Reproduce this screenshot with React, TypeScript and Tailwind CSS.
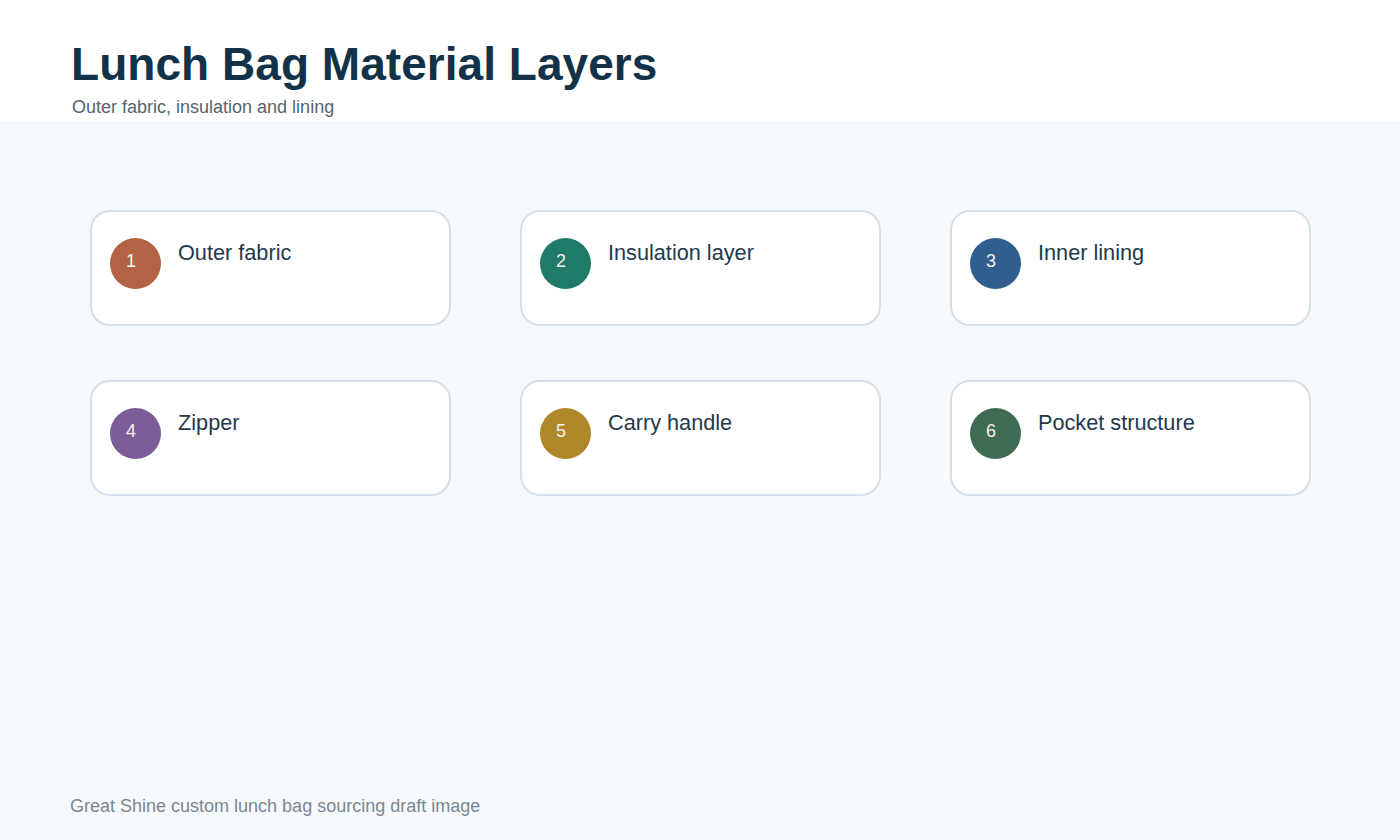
const layers = [
  { n: 1, label: 'Outer fabric', color: 'bg-[#b26345]' },
  { n: 2, label: 'Insulation layer', color: 'bg-[#1f7a68]' },
  { n: 3, label: 'Inner lining', color: 'bg-[#2f5f8f]' },
  { n: 4, label: 'Zipper', color: 'bg-[#7d5c9a]' },
  { n: 5, label: 'Carry handle', color: 'bg-[#b0862b]' },
  { n: 6, label: 'Pocket structure', color: 'bg-[#3f6b52]' },
];

export default function App() {
  return (
    <main className="w-[1400px] h-[840px] flex flex-col overflow-hidden bg-[#f6fafd] font-['Liberation_Sans',Arial,sans-serif]">
      <header className="h-[123px] shrink-0 bg-white border-b border-[#eef2f6] pl-[71px] pt-[38px]">
        <h1 className="text-[46px] leading-[53px] font-bold tracking-[0.04px] text-[#12324a] [font-kerning:none]">Lunch Bag Material Layers</h1>
        <p className="mt-[4px] ml-[1px] text-[18px] leading-[24px] text-[#536471]">
          Outer fabric, insulation and lining
        </p>
      </header>

      <section className="grid grid-cols-[361px_361px_361px] gap-x-[69px] gap-y-[54px] pl-[90px] pt-[87px]">
        {layers.map((item) => (
          <div
            key={item.n}
            className="h-[116px] flex items-start gap-[17px] bg-white border-2 border-[#d5e0ea] rounded-[20px] pl-[18px] pt-[26px]"
          >
            <div className={`w-[51px] h-[51px] shrink-0 rounded-full pl-[16px] pt-[13px] text-[18px] leading-[21px] text-[#f7f3ea] ${item.color}`}>
              {item.n}
            </div>
            <div className="mt-[2px] text-[21.7px] leading-[26px] text-[#22394a]">{item.label}</div>
          </div>
        ))}
      </section>

      <footer className="mt-auto pl-[70px] pb-[23px] text-[18px] leading-[21px] text-[#7a8791]">
        Great Shine custom lunch bag sourcing draft image
      </footer>
    </main>
  );
}
